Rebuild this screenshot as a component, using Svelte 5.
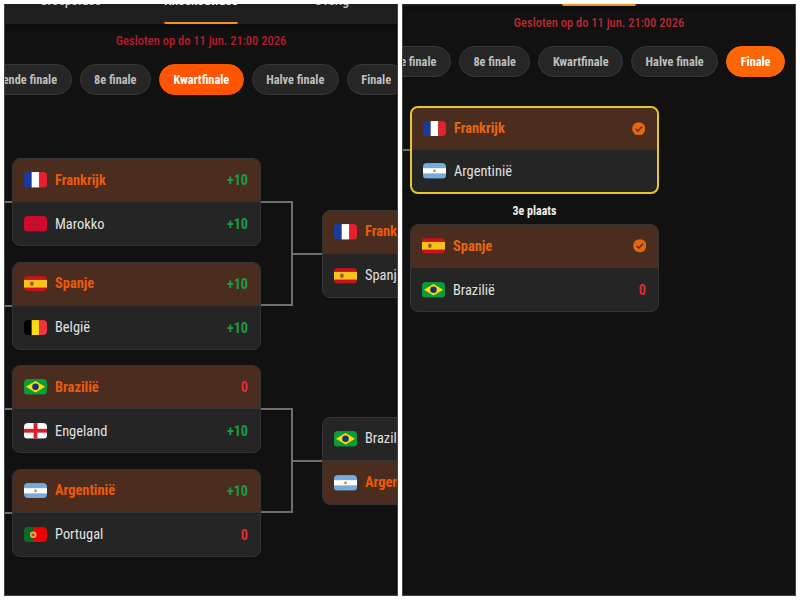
<script>
  const pills = ['Zestiende finale', '8e finale', 'Kwartfinale', 'Halve finale', 'Finale'];
  const p10 = { text: '+10', cls: 'plus' };
  const p0 = { text: '0', cls: 'zero' };
  const pairs = [
    { a: { top: ['fr', 'Frankrijk', p10], bottom: ['ma', 'Marokko', p10] }, b: { top: ['es', 'Spanje', p10], bottom: ['be', 'België', p10] },
      next: { rows: [['fr', 'Frankrijk', true], ['es', 'Spanje', false]] } },
    { a: { top: ['br', 'Brazilië', p0], bottom: ['en', 'Engeland', p10] }, b: { top: ['ar', 'Argentinië', p10], bottom: ['pt', 'Portugal', p0] },
      next: { rows: [['br', 'Brazilië', false], ['ar', 'Argentinië', true]] } }
  ];
</script>

{#snippet flag(code)}
  <svg class="flag" viewBox="0 0 24 16" aria-hidden="true">
    {#if code === 'fr'}
      <rect width="8" height="16" fill="#1a3a9c" /><rect x="8" width="8" height="16" fill="#fff" /><rect x="16" width="8" height="16" fill="#e8202e" />
    {:else if code === 'ma'}
      <rect width="24" height="16" fill="#cf0a2c" /><circle cx="12" cy="8" r="1.8" fill="#8f3030" />
    {:else if code === 'es'}
      <rect width="24" height="16" fill="#c4121e" /><rect y="4" width="24" height="8" fill="#f8c21c" /><rect x="6.5" y="6" width="3.5" height="4" rx="1" fill="#a5541e" />
    {:else if code === 'be'}
      <rect width="8" height="16" fill="#000" /><rect x="8" width="8" height="16" fill="#fbd914" /><rect x="16" width="8" height="16" fill="#ef3340" />
    {:else if code === 'br'}
      <rect width="24" height="16" fill="#0c9b3a" /><polygon points="12,2 22,8 12,14 2,8" fill="#fcdc04" /><circle cx="12" cy="8" r="3.4" fill="#16307c" />
    {:else if code === 'en'}
      <rect width="24" height="16" fill="#fff" /><rect x="10" width="4" height="16" fill="#d8202e" /><rect y="6" width="24" height="4" fill="#d8202e" />
    {:else if code === 'ar'}
      <rect width="24" height="16" fill="#74acdf" /><rect y="5.3" width="24" height="5.4" fill="#fff" /><circle cx="12" cy="8" r="1.6" fill="#d99a4a" />
    {:else if code === 'pt'}
      <rect width="24" height="16" fill="#f00000" /><rect width="9.6" height="16" fill="#056a2c" /><circle cx="9.6" cy="8" r="3.4" fill="#e8b23a" /><circle cx="9.6" cy="8" r="1.6" fill="#c8303a" />
    {/if}
  </svg>
{/snippet}

{#snippet check()}
  <svg class="check" viewBox="0 0 14 14" aria-hidden="true">
    <circle cx="7" cy="7" r="6.8" fill="var(--accent)" />
    <path d="M3.8 7.2 6.1 9.4 10.4 4.9" fill="none" stroke="#4a2d1f" stroke-width="1.4" />
  </svg>
{/snippet}

{#snippet row(r, win)}
  <div class="row" class:win>
    {@render flag(r[0])}
    <span class="name">{r[1]}</span>
    {#if r[2] === 'check'}
      {@render check()}
    {:else if r[2]}
      <span class="pts {r[2].cls}">{r[2].text}</span>
    {/if}
  </div>
{/snippet}

{#snippet tabs()}
  <div class="tabs">
    <div class="tab">Groepsfase</div>
    <div class="tab on"><span>Knockoutfase</span></div>
    <div class="tab">Overig</div>
  </div>
{/snippet}

{#snippet pillRow(active)}
  <div class="pills">
    {#each pills as p}
      <div class="pill" class:active={p === active}>{p}</div>
    {/each}
  </div>
{/snippet}

<div class="page">
  <section class="panel left">
    {@render tabs()}
    <p class="closed">Gesloten op do 11 jun. 21:00 2026</p>
    {@render pillRow('Kwartfinale')}
    <div class="bracket">
      {#each pairs as pair}
        <div class="pair">
          <div class="cards">
            <div class="card stub">
              {@render row(pair.a.top, true)}
              {@render row(pair.a.bottom, false)}
            </div>
            <div class="card stub">
              {@render row(pair.b.top, true)}
              {@render row(pair.b.bottom, false)}
            </div>
          </div>
          <div class="arm"></div>
          <div class="tail"></div>
          <div class="card next">
            {@render row(pair.next.rows[0].slice(0, 2), pair.next.rows[0][2])}
            {@render row(pair.next.rows[1].slice(0, 2), pair.next.rows[1][2])}
          </div>
        </div>
      {/each}
    </div>
  </section>

  <section class="panel right">
    {@render tabs()}
    <p class="closed">Gesloten op do 11 jun. 21:00 2026</p>
    {@render pillRow('Finale')}
    <div class="finals">
      <div class="card final stub">
        {@render row(['fr', 'Frankrijk', 'check'], true)}
        {@render row(['ar', 'Argentinië'], false)}
      </div>
      <div class="third">3e plaats</div>
      <div class="card">
        {@render row(['es', 'Spanje', 'check'], true)}
        {@render row(['br', 'Brazilië', p0], false)}
      </div>
    </div>
  </section>
</div>

<style>
  :global(body) { background: #fff; }
  .page {
    display: flex; justify-content: space-between; width: 800px; height: 600px; box-sizing: border-box; padding: 4px;
    background: #fff; font-family: "Roboto Condensed", Roboto, sans-serif;
  }
  .panel {
    --accent: #ec5a0a; width: 394px; overflow: hidden; background: #111; box-sizing: border-box;
    border: 1px solid #444; border-top: 0;
  }
  .right { --accent: #e8650f; }
  .tabs { display: flex; height: 44px; background: #1e1e1e; box-shadow: 0 3px 6px rgba(0, 0, 0, .35); }
  .left .tabs { margin-top: -24px; }
  .right .tabs { margin-top: -42px; }
  .tab { flex: 1; display: flex; justify-content: center; padding-top: 12px; font-size: 13.5px; line-height: 17px; font-weight: 500; color: #c4c4c4; }
  .tab.on { color: #eee; }
  .tab.on span { display: block; height: 32px; box-sizing: border-box; border-bottom: 2.5px solid #f0921e; border-radius: 0 0 2px 2px; }
  .closed { margin: 8px 0 0; text-align: center; font-size: 12.5px; line-height: 18px; font-weight: 500; color: #b71c2c; }
  .right .closed { color: #b62b33; }
  .pills { display: flex; gap: 8px; margin-top: 14px; }
  .left .pills { margin-left: -41.5px; }
  .right .pills { justify-content: flex-end; padding-right: 10px; }
  .pill {
    flex: none; height: 31px; box-sizing: border-box; padding: 0 13.5px; border: 1px solid #363636; border-radius: 16px; background: #262626;
    color: #bdbdbd; font-size: 12.3px; font-weight: 700; line-height: 30px; white-space: nowrap;
  }
  .pill.active { background: #ff5500; border-color: #ff5500; color: #fff; }
  .right .pill.active { background: #fb6606; border-color: #fb6606; }
  .bracket { display: flex; flex-direction: column; gap: 15.5px; margin-top: 63px; padding-left: 7px; }
  .pair { display: flex; align-items: center; }
  .cards { display: flex; flex-direction: column; gap: 15.5px; }
  .card { position: relative; flex: none; width: 249px; box-sizing: border-box; background: #252525; border: 1px solid #333; border-radius: 8px; }
  .card.stub::before { content: ""; position: absolute; left: -10px; top: 42px; width: 9px; height: 2px; background: #6e6e6e; }
  .row { display: flex; align-items: center; height: 43px; box-sizing: border-box; padding: 0 12px 0 11px; font-size: 14.4px; color: #e0e0e0; }
  .row:first-child { border-radius: 7px 7px 0 0; border-bottom: 1px solid #333; }
  .row:last-child { border-radius: 0 0 7px 7px; padding-top: 1px; }
  .row.win { background: #4a2d1f; color: var(--accent); font-weight: 700; }
  .flag { flex: none; width: 23px; height: 15.5px; border-radius: 4px; margin-right: 8px; }
  .name { flex: 1; white-space: nowrap; }
  .pts { font-weight: 700; font-size: 14.2px; }
  .plus { color: #1c9a3f; }
  .zero { color: #e02b35; }
  .check { flex: none; width: 13.5px; height: 13.5px; }
  .arm { flex: none; width: 31.5px; height: 105px; box-sizing: border-box; border: 2px solid #6e6e6e; border-left: 0; }
  .tail { flex: none; width: 29.5px; height: 2px; background: #6e6e6e; }
  .next { margin-right: -200px; }
  .finals { display: flex; flex-direction: column; align-items: flex-start; margin-top: 29px; padding-left: 7px; }
  .final { border: 2px solid #e8c52a; }
  .final .row { height: 42px; padding-top: 0; }
  .final.stub::before { left: -11px; top: 41px; }
  .third { width: 249px; margin: 10px 0 6px; text-align: center; font-size: 12px; line-height: 14px; font-weight: 700; color: #eee; }
</style>
